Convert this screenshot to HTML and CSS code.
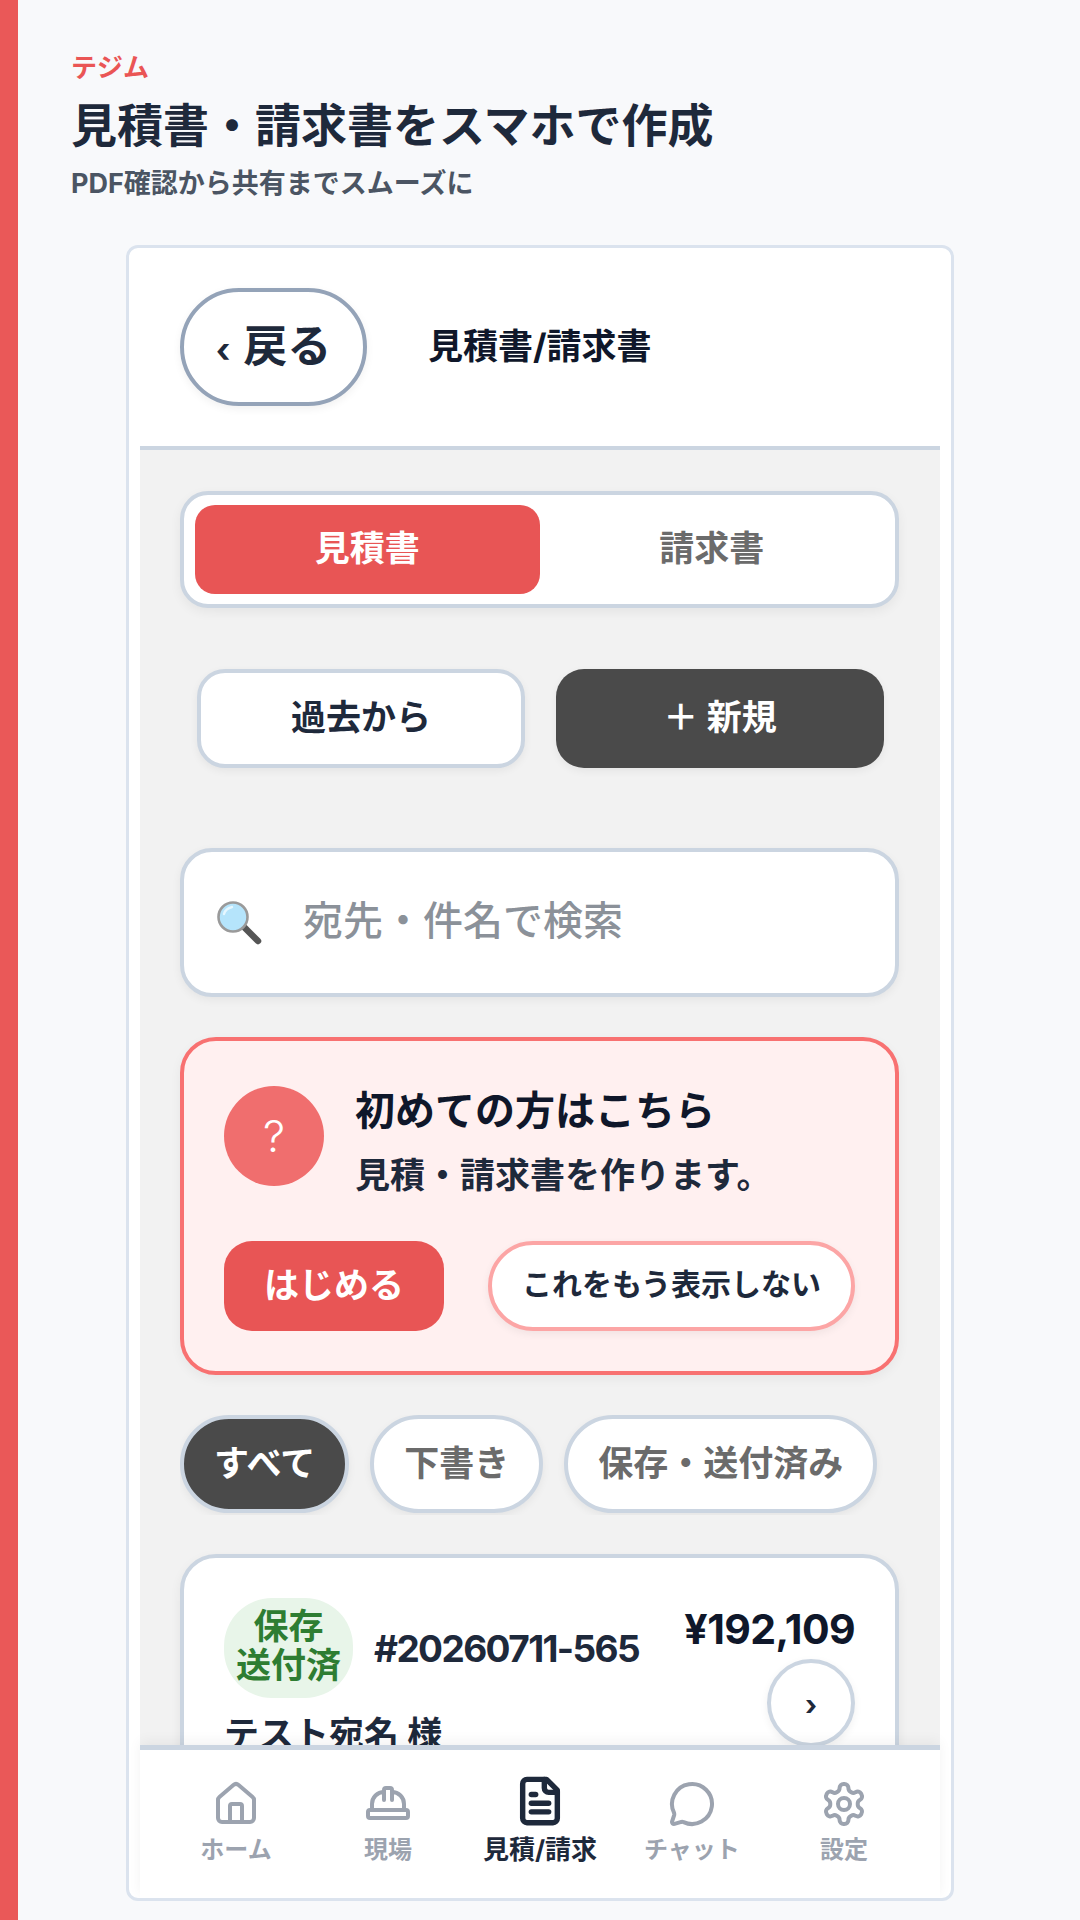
FILE: index.html
```html
<!DOCTYPE html>
<html lang="ja">
<head>
  <meta charset="UTF-8">
  <meta name="viewport" content="width=device-width, initial-scale=1.0">
  <title>テジム</title>
  <link rel="stylesheet" href="styles.css">
</head>
<body>
  <div class="page">
    <div class="accent-bar"></div>
    <main class="main">
      <p class="brand">テジム</p>
      <h1 class="headline">見積書・請求書をスマホで作成</h1>
      <p class="lead">PDF確認から共有までスムーズに</p>

      <div class="device">
        <header class="app-header">
          <button class="back-btn"><span class="back-chevron">‹</span>戻る</button>
          <span class="app-title">見積書/請求書</span>
        </header>

        <div class="content">
          <div class="tabs">
            <button class="tab tab-active">見積書</button>
            <button class="tab">請求書</button>
          </div>

          <div class="actions">
            <button class="action">過去から</button>
            <button class="action action-dark">＋ 新規</button>
          </div>

          <div class="search">
            <!-- magnifying glass -->
            <svg class="search-icon" viewBox="0 0 48 48" width="48" height="48">
              <path d="M29 28 L43 42" stroke="#555" stroke-width="6.5" stroke-linecap="round"/>
              <circle cx="18" cy="18" r="14.5" fill="#b5e4fb" stroke="#9a9a9a" stroke-width="2.6"/>
              <path d="M9 15 C10 11 13 9 17 8" fill="none" stroke="#e6f7ff" stroke-width="2.4" stroke-linecap="round"/>
            </svg>
            <input class="search-input" type="text" placeholder="宛先・件名で検索">
          </div>

          <section class="guide">
            <div class="guide-top">
              <div class="guide-mark">?</div>
              <div class="guide-copy">
                <h2 class="guide-title">初めての方はこちら</h2>
                <p class="guide-text">見積・請求書を作ります。</p>
              </div>
            </div>
            <div class="guide-buttons">
              <button class="guide-start">はじめる</button>
              <button class="guide-hide">これをもう表示しない</button>
            </div>
          </section>

          <div class="filters">
            <button class="chip chip-active">すべて</button>
            <button class="chip">下書き</button>
            <button class="chip">保存・送付済み</button>
          </div>

          <article class="doc-card">
            <div class="doc-left">
              <div class="doc-head">
                <span class="badge">保存<br>送付済</span>
                <span class="doc-no">#20260711-565</span>
              </div>
              <p class="doc-name">テスト宛名 様</p>
            </div>
            <div class="doc-right">
              <span class="doc-price">¥192,109</span>
              <button class="doc-open">›</button>
            </div>
          </article>
        </div>

        <nav class="tabbar">
          <div class="tabbar-item">
            <span class="tabbar-icon">
              <svg viewBox="0 0 24 24" width="48" height="48"><path d="M15 21v-8a1 1 0 0 0-1-1h-4a1 1 0 0 0-1 1v8"/><path d="M3 10a2 2 0 0 1 .709-1.528l7-5.999a2 2 0 0 1 2.582 0l7 5.999A2 2 0 0 1 21 10v9a2 2 0 0 1-2 2H5a2 2 0 0 1-2-2z"/></svg>
            </span>
            <span>ホーム</span>
          </div>
          <div class="tabbar-item">
            <span class="tabbar-icon">
              <svg viewBox="0 0 24 24" width="48" height="48"><path d="M10 10V5a1 1 0 0 1 1-1h2a1 1 0 0 1 1 1v5"/><path d="M14 6a6 6 0 0 1 6 6v3"/><path d="M4 15v-3a6 6 0 0 1 6-6"/><rect x="2" y="15" width="20" height="4" rx="1"/></svg>
            </span>
            <span>現場</span>
          </div>
          <div class="tabbar-item tabbar-active">
            <span class="tabbar-icon">
              <svg viewBox="0 0 24 24" width="52" height="52"><path d="M15 2H6a2 2 0 0 0-2 2v16a2 2 0 0 0 2 2h12a2 2 0 0 0 2-2V7Z"/><path d="M14 2v4a2 2 0 0 0 2 2h4"/><path d="M10 9H8"/><path d="M16 13H8"/><path d="M16 17H8"/></svg>
            </span>
            <span>見積/請求</span>
          </div>
          <div class="tabbar-item">
            <span class="tabbar-icon">
              <svg viewBox="0 0 24 24" width="48" height="48"><path d="M2.992 16.342a2 2 0 0 1 .094 1.167l-1.065 3.29a1 1 0 0 0 1.236 1.168l3.413-.998a2 2 0 0 1 1.099.092 10 10 0 1 0-4.777-4.719"/></svg>
            </span>
            <span>チャット</span>
          </div>
          <div class="tabbar-item">
            <span class="tabbar-icon">
              <svg viewBox="0 0 24 24" width="48" height="48"><path d="M12.22 2h-.44a2 2 0 0 0-2 2v.18a2 2 0 0 1-1 1.73l-.43.25a2 2 0 0 1-2 0l-.15-.08a2 2 0 0 0-2.73.73l-.22.38a2 2 0 0 0 .73 2.73l.15.1a2 2 0 0 1 1 1.72v.51a2 2 0 0 1-1 1.74l-.15.09a2 2 0 0 0-.73 2.73l.22.38a2 2 0 0 0 2.73.73l.15-.08a2 2 0 0 1 2 0l.43.25a2 2 0 0 1 1 1.73V20a2 2 0 0 0 2 2h.44a2 2 0 0 0 2-2v-.18a2 2 0 0 1 1-1.73l.43-.25a2 2 0 0 1 2 0l.15.08a2 2 0 0 0 2.73-.73l.22-.39a2 2 0 0 0-.73-2.73l-.15-.08a2 2 0 0 1-1-1.74v-.5a2 2 0 0 1 1-1.74l.15-.09a2 2 0 0 0 .73-2.73l-.22-.38a2 2 0 0 0-2.73-.73l-.15.08a2 2 0 0 1-2 0l-.43-.25a2 2 0 0 1-1-1.73V4a2 2 0 0 0-2-2z"/><circle cx="12" cy="12" r="3"/></svg>
            </span>
            <span>設定</span>
          </div>
        </nav>
      </div>
    </main>
  </div>
</body>
</html>
```

FILE: styles.css
```css
* {
  box-sizing: border-box;
}

html, body {
  margin: 0;
  height: 1920px;
  overflow: hidden;
}

body {
  font-family: "Inter", "Noto Sans CJK JP", sans-serif;
  background: #f8f9fb;
  color: #1e293b;
}

/* CJK glyphs sit low in Inter's line box, so buttons lift their text a little */
button {
  padding: 0 0 8px;
  font-family: inherit;
  cursor: pointer;
}

p, h1, h2 {
  margin: 0;
}

.page {
  display: flex;
  height: 1920px;
}

.accent-bar {
  width: 18px;
  background: #ea5858;
}

.main {
  flex: 1;
  padding: 50px 0 0 53px;
}

.brand {
  color: #ea5555;
  font-size: 26px;
  font-weight: 700;
  line-height: 35px;
}

.headline {
  margin-top: 10px;
  font-size: 46px;
  font-weight: 700;
  line-height: 60px;
  color: #1e293b;
}

.lead {
  margin-top: 12px;
  font-size: 27px;
  font-weight: 700;
  line-height: 34px;
  color: #4b5563;
}

/* Phone frame */
.device {
  display: flex;
  flex-direction: column;
  width: 828px;
  height: 1656px;
  margin: 44px 0 0 55px;
  padding: 0 11px;
  background: #fff;
  border: 3px solid #dbe3ee;
  border-radius: 12px;
  overflow: hidden;
}

.app-header {
  display: flex;
  align-items: center;
  gap: 61px;
  height: 198px;
  flex-shrink: 0;
  padding-left: 40px;
}

.back-btn {
  display: flex;
  align-items: center;
  justify-content: center;
  gap: 13px;
  width: 187px;
  height: 118px;
  background: #fff;
  border: 4px solid #94a3b8;
  border-radius: 59px;
  box-shadow: 0 3px 8px rgba(0, 0, 0, 0.06);
  color: #1e293b;
  font-size: 44px;
  font-weight: 700;
}

.back-chevron {
  margin-top: 13px;
  font-size: 34px;
  line-height: 1;
}

.app-title {
  padding-bottom: 8px;
  font-size: 35px;
  font-weight: 700;
  color: #0f172a;
}

.content {
  flex: 1;
  min-height: 0;
  overflow: hidden;
  padding: 41px 41px 0 40px;
  background: #f2f2f2;
  border-top: 4px solid #cbd5e1;
}

.tabs {
  display: flex;
  height: 117px;
  padding: 10px 11px;
  background: #fff;
  border: 4px solid #cbd5e1;
  border-radius: 28px;
  box-shadow: 0 4px 12px rgba(0, 0, 0, 0.06);
}

.tab {
  flex: 1;
  border: none;
  border-radius: 20px;
  background: none;
  color: #6b6b6b;
  font-size: 35px;
  font-weight: 700;
}

.tab-active {
  background: #e85555;
  color: #fff;
}

.actions {
  display: grid;
  grid-template-columns: 1fr 1fr;
  gap: 31px;
  margin: 61px 15px 0 17px;
}

.action {
  height: 99px;
  background: #fff;
  border: 4px solid #cbd5e1;
  border-radius: 28px;
  box-shadow: 0 3px 8px rgba(0, 0, 0, 0.06);
  color: #1e293b;
  font-size: 35px;
  font-weight: 700;
}

.action-dark {
  background: #4a4a4a;
  border: none;
  color: #fff;
}

.search {
  display: flex;
  align-items: center;
  gap: 40px;
  height: 149px;
  margin-top: 80px;
  padding: 0 32px 0 31px;
  background: #fff;
  border: 4px solid #cbd5e1;
  border-radius: 32px;
  box-shadow: 0 3px 10px rgba(0, 0, 0, 0.06);
}

.search-icon {
  flex-shrink: 0;
}

.search-input {
  flex: 1;
  min-width: 0;
  padding: 0 0 5px;
  border: none;
  outline: none;
  background: none;
  font-family: inherit;
  font-size: 40px;
  font-weight: 500;
}

.search-input::placeholder {
  color: #8b9199;
  opacity: 1;
}

.guide {
  height: 338px;
  margin-top: 40px;
  padding: 45px 40px 0;
  background: #fff0f0;
  border: 4px solid #f87171;
  border-radius: 36px;
  box-shadow: 0 4px 12px rgba(0, 0, 0, 0.05);
}

.guide-top {
  display: flex;
  gap: 31px;
}

.guide-mark {
  display: flex;
  align-items: center;
  justify-content: center;
  flex-shrink: 0;
  width: 100px;
  height: 100px;
  border-radius: 50%;
  background: #f06e6e;
  color: #fff;
  font-size: 44px;
  font-weight: 300;
}

.guide-copy {
  padding-top: 2px;
}

.guide-title {
  font-size: 40px;
  font-weight: 700;
  line-height: 46px;
  color: #0f172a;
}

.guide-text {
  margin-top: 18px;
  font-size: 35px;
  font-weight: 700;
  line-height: 46px;
  color: #1e293b;
}

.guide-buttons {
  display: flex;
  align-items: center;
  gap: 44px;
  margin-top: 43px;
}

.guide-start {
  width: 220px;
  height: 90px;
  border: none;
  border-radius: 28px;
  background: #e85555;
  color: #fff;
  font-size: 35px;
  font-weight: 700;
}

.guide-hide {
  width: 367px;
  height: 90px;
  background: #fff;
  border: 4px solid #fca5a5;
  border-radius: 45px;
  box-shadow: 0 3px 8px rgba(0, 0, 0, 0.06);
  color: #1e293b;
  font-size: 30px;
  font-weight: 700;
}

.filters {
  display: flex;
  gap: 21px;
  height: 100px;
  margin-top: 40px;
  overflow: hidden;
}

.chip {
  height: 98px;
  padding: 0 30px 7px;
  background: #fff;
  border: 4px solid #cbd5e1;
  border-radius: 49px;
  box-shadow: 0 3px 8px rgba(0, 0, 0, 0.06);
  color: #6b6b6b;
  font-size: 35px;
  font-weight: 700;
  white-space: nowrap;
}

.chip-active {
  background: #4a4a4a;
  color: #fff;
}

.doc-card {
  display: flex;
  justify-content: space-between;
  padding: 40px;
  margin-top: 39px;
  background: #fff;
  border: 4px solid #cbd5e1;
  border-radius: 36px;
  box-shadow: 0 4px 12px rgba(0, 0, 0, 0.06);
}

.doc-head {
  display: flex;
  align-items: center;
  gap: 21px;
}

.badge {
  display: flex;
  align-items: center;
  justify-content: center;
  width: 129px;
  height: 100px;
  padding-bottom: 4px;
  border-radius: 48px;
  background: #e8f5e9;
  color: #2e7d32;
  font-size: 35px;
  font-weight: 700;
  line-height: 39px;
  text-align: center;
}

.doc-no {
  font-size: 37px;
  font-weight: 700;
  letter-spacing: -1.6px;
  color: #1e293b;
}

.doc-name {
  margin-top: 12px;
  font-size: 35px;
  font-weight: 700;
  line-height: 48px;
  color: #1e293b;
}

.doc-right {
  display: flex;
  flex-direction: column;
  align-items: flex-end;
  gap: 6px;
  margin-top: 7px;
}

.doc-price {
  font-size: 41px;
  font-weight: 700;
  line-height: 48px;
  letter-spacing: -0.6px;
  color: #0f172a;
}

.doc-open {
  width: 88px;
  height: 88px;
  padding: 3px 0 0;
  background: #fff;
  border: 4px solid #cbd5e1;
  border-radius: 50%;
  box-shadow: 0 3px 8px rgba(0, 0, 0, 0.06);
  color: #1e293b;
  font-size: 28px;
  font-weight: 700;
}

/* Bottom navigation */
.tabbar {
  display: flex;
  flex-shrink: 0;
  height: 153px;
  padding: 30px 20px 0;
  background: #fff;
  border-top: 5px solid #cbd5e1;
  box-shadow: 0 -4px 12px rgba(0, 0, 0, 0.05);
}

.tabbar-item {
  flex: 1;
  display: flex;
  flex-direction: column;
  align-items: center;
  color: #9ca3af;
  font-size: 24px;
  font-weight: 700;
  line-height: 32px;
}

.tabbar-icon {
  display: flex;
  align-items: center;
  justify-content: center;
  height: 48px;
  margin-bottom: 6px;
}

.tabbar-icon svg {
  fill: none;
  stroke: currentColor;
  stroke-width: 2;
  stroke-linecap: round;
  stroke-linejoin: round;
}

.tabbar-active {
  color: #1e293b;
  font-size: 26px;
}

.tabbar-active .tabbar-icon svg {
  stroke-width: 2.5;
  transform: translateY(-3px);
}
```
